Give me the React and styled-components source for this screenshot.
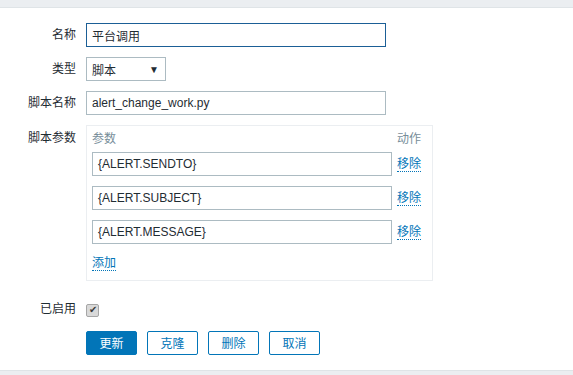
import { Fragment } from "react";
import { createGlobalStyle, styled } from "styled-components";

const GlobalStyle = createGlobalStyle`
	html, body {
		margin: 0;
		padding: 0;
		background: #ffffff;
		overflow: hidden;
	}
	body {
		font-family: "Liberation Sans", Arial, "Noto Sans CJK SC", sans-serif;
		font-size: 12px;
		color: #1f2c33;
	}
`;

const Page = styled.div`
	display: flex;
	flex-direction: column;
	height: 100vh;
`;

const TopBand = styled.div`
	height: 7px;
	background: #ebeef1;
	border-bottom: 1px solid #dfe4e7;
`;

const BottomBand = styled.div`
	flex: 1;
	background: #ebeef1;
	border-top: 1px solid #dfe4e7;
`;

const Form = styled.div`
	display: flex;
	flex-direction: column;
	gap: 10px;
	padding: 15px 0 15px 0;
`;

const Row = styled.div`
	display: grid;
	grid-template-columns: 76px auto;
	column-gap: 10px;
	align-items: ${(p) => (p.$top ? "start" : "center")};
	margin-top: ${(p) => p.$offset || 0}px;
`;

const Label = styled.div`
	text-align: right;
	line-height: 14px;
	padding-top: ${(p) => (p.$top ? "6px" : "0")};
`;

const TextInput = styled.div`
	box-sizing: border-box;
	width: ${(p) => p.$width || 300}px;
	height: 24px;
	display: flex;
	align-items: center;
	padding: 0 5px;
	border: 1px solid ${(p) => (p.$focus ? "#1b5f96" : "#acbbc2")};
	background: #ffffff;
	color: #1f2c33;
	white-space: nowrap;
`;

const Select = styled.div`
	box-sizing: border-box;
	width: 80px;
	height: 24px;
	display: flex;
	align-items: center;
	justify-content: space-between;
	padding: 0 6px 0 5px;
	border: 1px solid #acbbc2;
	background: #ffffff;
`;

const Arrow = styled.span`
	font-size: 10px;
	color: #1f2c33;
`;

const ParamTable = styled.div`
	box-sizing: border-box;
	width: 347px;
	border: 1px solid #ebeef1;
	padding: 5px 10px 5px 5px;
	display: grid;
	grid-template-columns: 300px auto;
	column-gap: 5px;
	row-gap: 10px;
	align-items: center;
`;

const HeadCell = styled.div`
	color: #768d99;
	line-height: 16px;
	margin-bottom: -5px;
	text-align: ${(p) => (p.$right ? "right" : "left")};
`;

const Link = styled.span`
	justify-self: start;
	color: #0275b8;
	line-height: 14px;
	border-bottom: 1px dotted #0275b8;
	cursor: pointer;
`;

const AddRow = styled.div`
	grid-column: 1 / 3;
	height: 24px;
	display: flex;
	align-items: center;
	margin-top: -3px;
`;

const CheckBox = styled.span`
	box-sizing: border-box;
	width: 13px;
	height: 13px;
	display: inline-flex;
	align-items: center;
	justify-content: center;
	background: #d9d9d9;
	border: 1px solid #a6a6a6;
	border-radius: 2px;
	font-size: 10px;
	line-height: 1;
	color: #3a3a3a;
`;

const Buttons = styled.div`
	display: flex;
	gap: 10px;
`;

const Button = styled.button`
	box-sizing: border-box;
	width: 51px;
	height: 24px;
	padding: 0;
	font-family: inherit;
	font-size: 12px;
	border-radius: 2px;
	border: 1px solid #0275b8;
	background: ${(p) => (p.$primary ? "#0275b8" : "#ffffff")};
	color: ${(p) => (p.$primary ? "#ffffff" : "#0275b8")};
	cursor: pointer;
`;

const params = ["{ALERT.SENDTO}", "{ALERT.SUBJECT}", "{ALERT.MESSAGE}"];

function App() {
	return (
		<Page>
			<GlobalStyle />
			<TopBand />
			<Form>
				<Row>
					<Label>名称</Label>
					<TextInput $focus>平台调用</TextInput>
				</Row>
				<Row>
					<Label>类型</Label>
					<Select>
						<span>脚本</span>
						<Arrow>▼</Arrow>
					</Select>
				</Row>
				<Row>
					<Label>脚本名称</Label>
					<TextInput>alert_change_work.py</TextInput>
				</Row>
				<Row $top>
					<Label $top>脚本参数</Label>
					<ParamTable>
						<HeadCell>参数</HeadCell>
						<HeadCell>动作</HeadCell>
						{params.map((p) => (
							<Fragment key={p}>
								<TextInput>{p}</TextInput>
								<Link>移除</Link>
							</Fragment>
						))}
						<AddRow>
							<Link>添加</Link>
						</AddRow>
					</ParamTable>
				</Row>
				<Row $offset={11}>
					<Label>已启用</Label>
					<div>
						<CheckBox>✔</CheckBox>
					</div>
				</Row>
				<Row $offset={4}>
					<div />
					<Buttons>
						<Button $primary>更新</Button>
						<Button>克隆</Button>
						<Button>删除</Button>
						<Button>取消</Button>
					</Buttons>
				</Row>
			</Form>
			<BottomBand />
		</Page>
	);
}

export default App;
